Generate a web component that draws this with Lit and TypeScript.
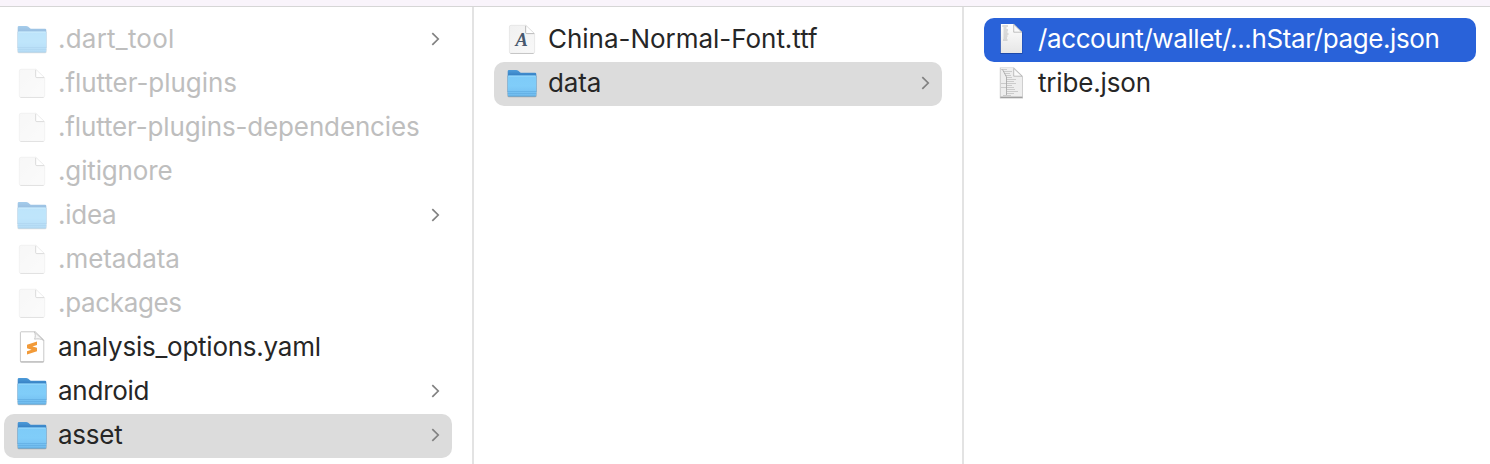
import { LitElement, html, svg, css } from "lit";
import { customElement, property } from "lit/decorators.js";
import { classMap } from "lit/directives/class-map.js";

type Kind = "folder" | "blank" | "sublime" | "font" | "json" | "code";

interface Entry {
  name: string;
  kind: Kind;
  track: number;
  dim?: boolean;
  open?: boolean;
  active?: boolean;
}

const columns: Entry[][] = [
  [
    { name: ".dart_tool", kind: "folder", track: 0.22, dim: true },
    { name: ".flutter-plugins", kind: "blank", track: -0.05, dim: true },
    { name: ".flutter-plugins-dependencies", kind: "blank", track: -0.14, dim: true },
    { name: ".gitignore", kind: "blank", track: -0.15, dim: true },
    { name: ".idea", kind: "folder", track: -0.25, dim: true },
    { name: ".metadata", kind: "blank", track: -0.06, dim: true },
    { name: ".packages", kind: "blank", track: -0.35, dim: true },
    { name: "analysis_options.yaml", kind: "sublime", track: -0.24 },
    { name: "android", kind: "folder", track: -0.25 },
    { name: "asset", kind: "folder", track: -0.25, open: true },
  ],
  [
    { name: "China-Normal-Font.ttf", kind: "font", track: -0.03 },
    { name: "data", kind: "folder", track: -0.15, open: true },
  ],
  [
    { name: "/account/wallet/...hStar/page.json", kind: "json", track: -0.39, active: true },
    { name: "tribe.json", kind: "code", track: -0.17 },
  ],
];

const folder = svg`
  <defs>
    <linearGradient id="front" x1="0" y1="0" x2="0" y2="1">
      <stop offset="0" stop-color="#7ecbf8" />
      <stop offset="0.5" stop-color="#80cdf9" />
      <stop offset="1" stop-color="#72bdf0" />
    </linearGradient>
    <linearGradient id="back" x1="0" y1="0" x2="0" y2="1">
      <stop offset="0" stop-color="#4d9bd9" />
      <stop offset="0.25" stop-color="#3781c4" />
    </linearGradient>
  </defs>
  <rect x="1.4" y="13" width="29.2" height="22.3" rx="1.5" fill="#000" opacity="0.22" />
  <path d="M1.7 9.3Q1.7 8 3 8H10.2Q11.2 8 12 8.6L14 10.2Q14.7 10.8 15.7 10.8H29Q30.3 10.8 30.3 12V30H1.7Z" fill="url(#back)" />
  <path d="M1.7 14.8Q1.7 13.5 3 13.5H29Q30.3 13.5 30.3 14.8V33Q30.3 34.2 29 34.2H3Q1.7 34.2 1.7 33Z" fill="url(#front)" />
  <path d="M2.4 14.1H29.6" stroke="#9bdafc" stroke-width="0.9" />
  <path d="M1.7 29.6H30.3M1.7 31.6H30.3" stroke="#5fabdf" stroke-width="0.7" />
  <path d="M2.2 34.1H29.8" stroke="#549fd2" stroke-width="0.8" />`;

const sheet = svg`
  <defs>
    <linearGradient id="paper" x1="0" y1="0" x2="1" y2="1">
      <stop offset="0" stop-color="#f1f1f1" />
      <stop offset="1" stop-color="#f8f8f8" />
    </linearGradient>
  </defs>
  <path d="M5 7.3H19.8L28.6 15.6V34Q28.6 35.4 27 35.4H5Q3.4 35.4 3.4 34V9Q3.4 7.3 5 7.3Z" fill="url(#paper)" stroke="#dcdcdc" stroke-width="0.6" />
  <path d="M4.4 35.5H27.6" stroke="#c2c2c2" stroke-width="0.9" />
  <path d="M19.7 7.3V14.4Q19.7 15.5 20.8 15.5H28.4Z" fill="#fff" stroke="#cdcdcd" stroke-width="0.5" />
  <path d="M19.6 8V14.4Q19.6 15.6 20.8 15.6H28" fill="none" stroke="#b4b4b4" stroke-width="0.8" />`;

const sublime = svg`
  <path d="M5 5.8H19.3L27.8 14V35Q27.8 36 26.8 36H5.4Q4.4 36 4.4 35V6.6Q4.4 5.8 5 5.8Z" fill="#fff" stroke="#c2c2c2" stroke-width="0.9" />
  <path d="M4.6 35.9H27.6" stroke="#9c9c9c" stroke-width="0.7" />
  <path d="M18.4 6C19.6 8.2 19.4 11.2 18.6 13.2C21.5 12.5 25 12.7 27.5 14.4Z" fill="#f6f6f6" stroke="#bdbdbd" stroke-width="0.8" />
  <path d="M21 15.6V19L16.4 20.4L21 21.8V25.2L11 28.6V25.2L15.6 23.7L11 22.2V18.7Z" fill="#f29a38" />`;

const fontFile = svg`${sheet}
  <text x="15.6" y="28" class="glyph">A</text>`;

const json = svg`
  <defs>
    <linearGradient id="thumb" x1="0" y1="0" x2="0" y2="1">
      <stop offset="0" stop-color="#fff" />
      <stop offset="1" stop-color="#e6e6e6" />
    </linearGradient>
  </defs>
  <path d="M4.2 6H18L26.5 14.5V36H4.2Z" fill="#0b2464" opacity="0.4" />
  <path d="M4.8 6H17.8L26 14V35H4.8Z" fill="url(#thumb)" />
  <path d="M6.3 8H12M7.5 10H10.5M7.5 12H12M7.5 14H11.5M7.5 16H12.5M7.5 18H11.5M7.5 20H11M7 22H11.5" stroke="#a9a9a9" stroke-width="0.8" />
  <path d="M17.7 6.3V14.2H25.8Z" fill="#fafafa" stroke="#a8a8a8" stroke-width="0.7" />`;

const code = svg`
  <path d="M3.8 5.5H18L27 14.3V36.4H3.8Z" fill="#000" opacity="0.22" />
  <path d="M4.7 6H17.8L26.2 14.2V35H4.7Z" fill="#eee" />
  <path d="M5 7.5H11M7 9.5H16M8 11.5H14M9 13.5H15M10 15.5H16M10 17.5H20M10 19.5H18M5 21.5H20M11 23.5H16M5 25.5H18M11 27.5H19M11 29.5H22M10 31.5H18M7 33.5H15" stroke="#b4b4b4" stroke-width="0.6" />
  <path d="M6.5 7.5L10.5 15V33" fill="none" stroke="#aaa" stroke-width="0.9" />
  <path d="M17.7 6.3V14.2H26Z" fill="#fafafa" stroke="#a8a8a8" stroke-width="0.7" />
  <path d="M4.5 35.2H26.3" stroke="#8f8f8f" stroke-width="1" />`;

const icons = { folder, blank: sheet, sublime, font: fontFile, json, code };

@customElement("finder-row")
class FinderRow extends LitElement {
  @property({ attribute: false }) entry!: Entry;

  static styles = css`
    :host { display: block; }
    .row {
      display: flex;
      align-items: center;
      height: 44px;
      padding: 0 12px;
      box-sizing: border-box;
      border-radius: 10px;
      color: #262626;
    }
    .open { background: #dcdcdc; }
    .active { background: #2962d9; color: #fff; }
    .icon { flex: none; width: 32px; height: 44px; }
    .name {
      flex: 1;
      margin-left: 10px;
      padding-bottom: 2px;
      font: 400 26px/42px Inter, "Liberation Sans", sans-serif;
      white-space: nowrap;
    }
    .dim .name { color: #bebebe; }
    .dim .icon { opacity: 0.5; }
    .chevron { flex: none; width: 9px; height: 14px; padding-bottom: 2px; }
    .glyph {
      font: italic 700 18.5px "Liberation Serif", serif;
      fill: #48586e;
      text-anchor: middle;
    }
  `;

  render() {
    const { name, kind, track, dim, open, active } = this.entry;
    return html`
      <div class=${classMap({ row: true, dim: !!dim, open: !!open, active: !!active })}>
        <svg class="icon" viewBox="0 0 32 44">${icons[kind]}</svg>
        <span class="name" style="letter-spacing:${track}px">${name}</span>
        ${kind === "folder"
          ? html`<svg class="chevron" viewBox="0 0 9 14">
              <path d="M1.3 1.2L7.2 7L1.3 12.8" fill="none" stroke="#818181" stroke-width="1.7" />
            </svg>`
          : null}
      </div>
    `;
  }
}

@customElement("app-root")
class AppRoot extends LitElement {
  static styles = css`
    :host {
      display: flex;
      flex-direction: column;
      height: 464px;
      overflow: hidden;
      background: #fff;
    }
    .toolbar {
      flex: none;
      height: 6px;
      background: #f9f4fb;
      border-bottom: 1px solid #d6d6d6;
    }
    .browser {
      flex: 1;
      min-height: 0;
      display: grid;
      grid-template-columns: 474px 490px 1fr;
    }
    .column {
      box-sizing: border-box;
      padding: 11px 20px 0 4px;
      border-right: 2px solid #e3e3e3;
    }
    .column:nth-child(2) { padding-left: 20px; }
    .column:last-child { padding: 11px 14px 0 20px; border: 0; }
  `;

  render() {
    return html`
      <div class="toolbar"></div>
      <div class="browser">
        ${columns.map(
          (items) => html`<div class="column">
            ${items.map((e) => html`<finder-row .entry=${e}></finder-row>`)}
          </div>`
        )}
      </div>
    `;
  }
}
